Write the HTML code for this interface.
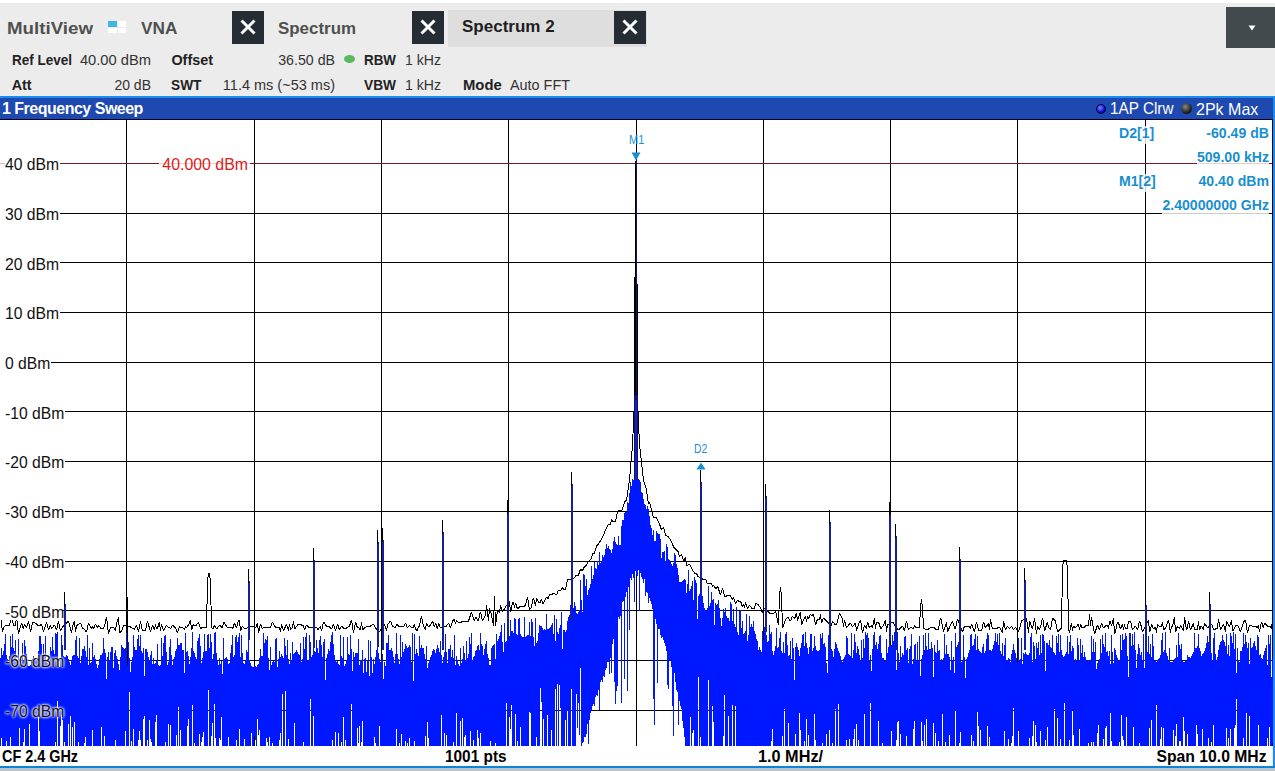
<!DOCTYPE html>
<html><head><meta charset="utf-8">
<style>
*{margin:0;padding:0;box-sizing:border-box}
html,body{width:1275px;height:771px;overflow:hidden;background:#ececec;font-family:"Liberation Sans", sans-serif}
.abs{position:absolute}
.t{position:absolute;white-space:pre}
.xb{position:absolute;top:11px;width:32px;height:33px;background:#252c33}
.xb svg{display:block}
.hl{position:absolute;left:0;width:1272px;height:1px;background:#000}
.vl{position:absolute;top:120px;width:1px;height:626px;background:#000}
</style></head><body>
<div class="abs" style="left:0;top:0;width:1275px;height:3px;background:#fff"></div>
<div class="abs" style="left:448px;top:10px;width:199px;height:37px;background:#dedede"></div>
<div class="xb" style="left:232px"><svg width="32" height="33" viewBox="0 0 32 33"><path d="M9.5 9.5L22.5 22.5M22.5 9.5L9.5 22.5" stroke="#fff" stroke-width="3" stroke-linecap="butt"/></svg></div><div class="xb" style="left:412px"><svg width="32" height="33" viewBox="0 0 32 33"><path d="M9.5 9.5L22.5 22.5M22.5 9.5L9.5 22.5" stroke="#fff" stroke-width="3" stroke-linecap="butt"/></svg></div><div class="xb" style="left:614px"><svg width="32" height="33" viewBox="0 0 32 33"><path d="M9.5 9.5L22.5 22.5M22.5 9.5L9.5 22.5" stroke="#fff" stroke-width="3" stroke-linecap="butt"/></svg></div>
<div class="abs" style="left:1226px;top:7px;width:49px;height:41px;background:#434a4e"></div>
<svg class="abs" style="left:1248px;top:25px" width="8" height="6"><path d="M0.5 0.5H7.5L4 5.5Z" fill="#fff"/></svg>
<!-- multiview icon -->
<div class="abs" style="left:108px;top:21px;width:9px;height:6px;background:#3fb6e8"></div>
<div class="abs" style="left:118px;top:21px;width:8px;height:6px;background:#fff"></div>
<div class="abs" style="left:108px;top:28px;width:9px;height:5px;background:#fff"></div>
<div class="abs" style="left:118px;top:28px;width:8px;height:5px;background:#fff"></div>
<div class="t" style="left:6.5px;top:19.83px;font-size:16.5px;line-height:16.5px;font-weight:700;color:#505050;transform:scaleX(1.134);transform-origin:0 0;">MultiView</div>
<div class="t" style="left:140.5px;top:19.83px;font-size:16.5px;line-height:16.5px;font-weight:700;color:#505050;transform:scaleX(1.043);transform-origin:0 0;">VNA</div>
<div class="t" style="left:278px;top:19.83px;font-size:16.5px;line-height:16.5px;font-weight:700;color:#505050;transform:scaleX(1.025);transform-origin:0 0;">Spectrum</div>
<div class="t" style="left:462px;top:18.41px;font-size:17px;line-height:17px;font-weight:700;color:#1e1e1e;">Spectrum 2</div>
<div class="t" style="left:11.7px;top:52.61px;font-size:14.4px;line-height:14.4px;font-weight:700;color:#222;transform:scaleX(0.9375);transform-origin:0 0;">Ref Level</div>
<div class="t" style="right:1124px;top:52.56px;font-size:14.7px;line-height:14.7px;font-weight:400;color:#333;">40.00 dBm</div>
<div class="t" style="left:171.4px;top:52.61px;font-size:14.4px;line-height:14.4px;font-weight:700;color:#222;">Offset</div>
<div class="t" style="right:940px;top:52.98px;font-size:14.2px;line-height:14.2px;font-weight:400;color:#333;">36.50 dB</div>
<div class="abs" style="left:344px;top:55px;width:11px;height:8px;border-radius:50%;background:#5cb85c"></div>
<div class="t" style="left:363.5px;top:52.61px;font-size:14.4px;line-height:14.4px;font-weight:700;color:#222;transform:scaleX(0.93);transform-origin:0 0;">RBW</div>
<div class="t" style="left:405px;top:53.06px;font-size:14.1px;line-height:14.1px;font-weight:400;color:#333;">1 kHz</div>
<div class="t" style="left:11.7px;top:77.71px;font-size:14.4px;line-height:14.4px;font-weight:700;color:#222;">Att</div>
<div class="t" style="right:1124px;top:78.15px;font-size:14px;line-height:14px;font-weight:400;color:#333;">20 dB</div>
<div class="t" style="left:171.4px;top:77.71px;font-size:14.4px;line-height:14.4px;font-weight:700;color:#222;transform:scaleX(0.953);transform-origin:0 0;">SWT</div>
<div class="t" style="right:940px;top:77.73px;font-size:14.5px;line-height:14.5px;font-weight:400;color:#333;">11.4 ms (~53 ms)</div>
<div class="t" style="left:363.5px;top:77.71px;font-size:14.4px;line-height:14.4px;font-weight:700;color:#222;transform:scaleX(0.952);transform-origin:0 0;">VBW</div>
<div class="t" style="left:405px;top:78.06px;font-size:14.1px;line-height:14.1px;font-weight:400;color:#333;">1 kHz</div>
<div class="t" style="left:462.8px;top:77.71px;font-size:14.4px;line-height:14.4px;font-weight:700;color:#222;transform:scaleX(1.03);transform-origin:0 0;">Mode</div>
<div class="t" style="left:510px;top:77.81px;font-size:14.4px;line-height:14.4px;font-weight:400;color:#333;">Auto FFT</div>
<!-- frame -->
<div class="abs" style="left:0;top:96px;width:1275px;height:2px;background:#1a8cf0"></div>
<div class="abs" style="left:1273px;top:96px;width:2px;height:672px;background:#1a8cf0"></div>
<div class="abs" style="left:0;top:766px;width:1275px;height:2px;background:#0c84d8"></div>
<div class="abs" style="left:0;top:768px;width:1275px;height:3px;background:#b9c4cd"></div>
<div class="abs" style="left:0;top:98px;width:1273px;height:21px;background:#1e49b0"></div>
<div class="abs" style="left:0;top:119px;width:1273px;height:1px;background:#00001a"></div>
<div class="abs" style="left:1272px;top:119px;width:1px;height:627px;background:#00001a"></div>
<div class="abs" style="left:0;top:120px;width:1272px;height:646px;background:#fff"></div>
<div class="t" style="left:2px;top:101.46px;font-size:16px;line-height:16px;font-weight:700;color:#fff;letter-spacing:-0.5px;">1 Frequency Sweep</div>
<div class="abs" style="left:1096px;top:104px;width:10px;height:10px;border-radius:50%;background:radial-gradient(circle at 40% 35%,#8080ff,#1010d0 60%,#000060);border:1px solid #000040"></div>
<div class="t" style="left:1110px;top:101.46px;font-size:16px;line-height:16px;font-weight:400;color:#fff;transform:scaleX(0.956);transform-origin:0 0;">1AP Clrw</div>
<div class="abs" style="left:1181px;top:103px;width:11px;height:11px;border-radius:50%;background:radial-gradient(circle at 40% 35%,#888,#222 60%,#000);"></div>
<div class="t" style="left:1195.6px;top:101.29px;font-size:16.2px;line-height:16.2px;font-weight:400;color:#fff;transform:scaleX(0.99);transform-origin:0 0;">2Pk Max</div>
<div class="hl" style="top:213px"></div>
<div class="hl" style="top:262px"></div>
<div class="hl" style="top:312px"></div>
<div class="hl" style="top:362px"></div>
<div class="hl" style="top:411px"></div>
<div class="hl" style="top:461px"></div>
<div class="hl" style="top:511px"></div>
<div class="hl" style="top:561px"></div>
<div class="hl" style="top:610px"></div>
<div class="hl" style="top:660px"></div>
<div class="hl" style="top:710px"></div>
<div class="vl" style="left:126px"></div>
<div class="vl" style="left:254px"></div>
<div class="vl" style="left:381px"></div>
<div class="vl" style="left:508px"></div>
<div class="vl" style="left:636px"></div>
<div class="vl" style="left:763px"></div>
<div class="vl" style="left:890px"></div>
<div class="vl" style="left:1017px"></div>
<div class="vl" style="left:1145px"></div>
<div class="abs" style="left:0;top:163px;width:1272px;height:1px;background:#6b1f1f"></div>
<svg width="1273" height="626" viewBox="0 120 1273 626" style="position:absolute;left:0;top:120px" shape-rendering="crispEdges">
<path d="M0.5 658V746M1.5 648V738M2.5 655V746M3.5 651V746M4.5 644V746M5.5 634V746M6.5 655V741M7.5 659V746M8.5 662V746M9.5 656V746M10.5 636V737M11.5 647V746M12.5 634V746M13.5 648V746M14.5 651V746M15.5 640V746M16.5 659V746M17.5 662V746M18.5 639V746M19.5 664V728M20.5 664V746M21.5 666V746M22.5 643V746M23.5 661V742M24.5 640V729M25.5 646V746M26.5 654V746M27.5 662V746M28.5 666V746M29.5 666V724M30.5 665V746M31.5 661V746M32.5 659V746M33.5 656V746M34.5 658V746M35.5 658V746M36.5 660V746M37.5 658V746M38.5 651V713M39.5 636V731M40.5 636V746M41.5 644V746M42.5 657V746M43.5 644V746M44.5 654V746M45.5 636V746M46.5 662V746M47.5 663V746M48.5 664V746M49.5 663V746M50.5 647V746M51.5 651V746M52.5 637V746M53.5 650V746M54.5 654V746M55.5 633V742M56.5 634V746M57.5 632V701M58.5 660V746M59.5 667V746M60.5 658V726M61.5 635V715M62.5 645V720M63.5 656V746M64.5 657V742M65.5 657V746M66.5 655V746M67.5 656V746M68.5 659V724M69.5 662V746M70.5 665V716M71.5 660V746M72.5 656V727M73.5 655V746M74.5 655V722M75.5 640V746M76.5 636V746M77.5 656V746M78.5 658V742M79.5 638V746M80.5 663V746M81.5 656V746M82.5 649V746M83.5 649V746M84.5 646V743M85.5 651V737M86.5 657V746M87.5 635V746M88.5 665V746M89.5 648V746M90.5 663V746M91.5 662V746M92.5 643V730M93.5 657V746M94.5 655V746M95.5 659V746M96.5 664V746M97.5 668V746M98.5 665V746M99.5 659V746M100.5 655V746M101.5 655V727M102.5 653V746M103.5 638V746M104.5 649V736M105.5 653V746M106.5 679V746M107.5 657V746M108.5 652V746M109.5 660V746M110.5 652V746M111.5 647V746M112.5 647V746M113.5 668V746M114.5 653V746M115.5 650V740M116.5 656V746M117.5 659V746M118.5 664V746M119.5 670V746M120.5 657V746M121.5 645V746M122.5 647V746M123.5 648V746M124.5 649V746M125.5 648V731M126.5 633V746M127.5 647V746M128.5 642V746M129.5 658V692M130.5 672V746M131.5 662V741M132.5 657V746M133.5 635V729M134.5 647V746M135.5 650V746M136.5 650V746M137.5 639V746M138.5 635V740M139.5 646V731M140.5 635V740M141.5 651V746M142.5 653V746M143.5 648V719M144.5 676V716M145.5 649V746M146.5 649V746M147.5 652V740M148.5 657V746M149.5 661V720M150.5 655V739M151.5 651V742M152.5 664V746M153.5 658V746M154.5 664V746M155.5 663V722M156.5 661V715M157.5 644V746M158.5 665V746M159.5 666V746M160.5 665V746M161.5 638V746M162.5 656V746M163.5 643V746M164.5 636V746M165.5 635V742M166.5 652V746M167.5 665V746M168.5 662V724M169.5 647V746M170.5 639V725M171.5 655V746M172.5 665V746M173.5 659V746M174.5 657V746M175.5 651V746M176.5 649V735M177.5 638V746M178.5 645V707M179.5 645V746M180.5 643V730M181.5 643V746M182.5 650V746M183.5 650V746M184.5 673V746M185.5 633V746M186.5 652V746M187.5 651V726M188.5 656V719M189.5 664V746M190.5 657V746M191.5 648V746M192.5 632V705M193.5 651V746M194.5 653V743M195.5 657V746M196.5 659V746M197.5 641V746M198.5 638V746M199.5 634V734M200.5 646V746M201.5 663V742M202.5 658V737M203.5 652V732M204.5 634V746M205.5 651V746M206.5 651V746M207.5 635V746M208.5 634V690M209.5 648V746M210.5 634V746M211.5 642V736M212.5 659V723M213.5 654V746M214.5 633V704M215.5 632V738M216.5 653V746M217.5 661V746M218.5 665V746M219.5 658V738M220.5 664V740M221.5 661V717M222.5 674V746M223.5 638V746M224.5 659V746M225.5 658V746M226.5 657V746M227.5 659V746M228.5 664V737M229.5 663V746M230.5 653V746M231.5 645V746M232.5 635V746M233.5 657V746M234.5 655V746M235.5 637V746M236.5 635V740M237.5 642V746M238.5 637V746M239.5 633V729M240.5 657V746M241.5 635V746M242.5 653V746M243.5 663V746M244.5 664V739M245.5 661V746M246.5 650V746M247.5 652V746M248.5 633V746M249.5 660V746M250.5 663V746M251.5 666V733M252.5 667V746M253.5 667V746M254.5 666V736M255.5 666V740M256.5 667V746M257.5 665V719M258.5 664V735M259.5 658V730M260.5 649V746M261.5 656V746M262.5 656V746M263.5 633V746M264.5 643V746M265.5 639V746M266.5 640V738M267.5 636V742M268.5 658V746M269.5 670V737M270.5 647V746M271.5 665V746M272.5 662V743M273.5 661V746M274.5 662V746M275.5 639V746M276.5 638V746M277.5 667V746M278.5 659V746M279.5 651V740M280.5 657V733M281.5 654V746M282.5 656V694M283.5 658V746M284.5 638V746M285.5 646V691M286.5 655V746M287.5 640V746M288.5 659V739M289.5 664V746M290.5 653V746M291.5 660V746M292.5 642V746M293.5 654V746M294.5 653V723M295.5 652V746M296.5 650V746M297.5 652V746M298.5 654V746M299.5 655V746M300.5 643V746M301.5 662V746M302.5 659V746M303.5 637V742M304.5 649V746M305.5 637V746M306.5 633V746M307.5 661V746M308.5 660V746M309.5 635V746M310.5 642V699M311.5 657V746M312.5 655V746M313.5 641V716M314.5 651V746M315.5 652V746M316.5 640V746M317.5 648V746M318.5 653V746M319.5 640V746M320.5 636V746M321.5 645V746M322.5 657V746M323.5 642V746M324.5 639V746M325.5 680V746M326.5 658V746M327.5 654V746M328.5 649V746M329.5 651V746M330.5 642V746M331.5 635V746M332.5 632V740M333.5 644V746M334.5 655V746M335.5 660V732M336.5 662V746M337.5 661V746M338.5 664V733M339.5 665V746M340.5 635V746M341.5 656V742M342.5 658V746M343.5 637V717M344.5 666V746M345.5 664V740M346.5 660V746M347.5 637V746M348.5 654V746M349.5 655V746M350.5 635V746M351.5 649V704M352.5 671V746M353.5 652V746M354.5 657V746M355.5 653V746M356.5 653V746M357.5 653V728M358.5 639V743M359.5 665V726M360.5 660V746M361.5 660V742M362.5 650V721M363.5 673V746M364.5 659V746M365.5 658V746M366.5 672V746M367.5 660V746M368.5 640V746M369.5 676V746M370.5 641V746M371.5 657V746M372.5 673V746M373.5 659V746M374.5 664V737M375.5 657V743M376.5 650V746M377.5 640V746M378.5 653V746M379.5 659V726M380.5 662V746M381.5 660V746M382.5 654V746M383.5 679V746M384.5 662V746M385.5 666V746M386.5 643V746M387.5 643V746M388.5 635V746M389.5 650V746M390.5 650V746M391.5 648V746M392.5 651V746M393.5 657V746M394.5 663V746M395.5 654V746M396.5 633V729M397.5 654V746M398.5 659V746M399.5 664V743M400.5 635V746M401.5 657V734M402.5 642V746M403.5 652V746M404.5 649V746M405.5 644V741M406.5 646V746M407.5 648V743M408.5 647V746M409.5 645V738M410.5 647V746M411.5 662V746M412.5 633V746M413.5 681V746M414.5 634V741M415.5 654V746M416.5 649V746M417.5 653V746M418.5 656V746M419.5 636V746M420.5 648V746M421.5 645V746M422.5 648V746M423.5 648V746M424.5 654V746M425.5 659V736M426.5 646V746M427.5 668V722M428.5 663V738M429.5 660V746M430.5 657V746M431.5 655V746M432.5 651V746M433.5 649V746M434.5 650V746M435.5 653V746M436.5 649V746M437.5 645V746M438.5 648V746M439.5 652V746M440.5 641V746M441.5 655V715M442.5 663V746M443.5 657V746M444.5 652V733M445.5 634V746M446.5 652V735M447.5 663V746M448.5 649V746M449.5 649V746M450.5 645V746M451.5 657V746M452.5 650V746M453.5 658V742M454.5 635V746M455.5 665V746M456.5 656V713M457.5 660V746M458.5 664V746M459.5 666V746M460.5 648V721M461.5 663V746M462.5 659V718M463.5 646V746M464.5 653V737M465.5 661V735M466.5 641V746M467.5 658V746M468.5 654V746M469.5 637V746M470.5 644V731M471.5 633V746M472.5 660V746M473.5 657V740M474.5 656V746M475.5 651V746M476.5 650V746M477.5 646V730M478.5 645V738M479.5 650V746M480.5 633V733M481.5 644V746M482.5 646V746M483.5 655V746M484.5 649V746M485.5 644V746M486.5 641V746M487.5 654V746M488.5 658V746M489.5 665V746M490.5 665V741M491.5 648V746M492.5 646V746M493.5 645V746M494.5 644V746M495.5 659V743M496.5 634V746M497.5 641V746M498.5 639V746M499.5 636V746M500.5 632V746M501.5 625V746M502.5 642V746M503.5 652V746M504.5 623V746M505.5 642V746M506.5 641V703M507.5 631V746M508.5 639V746M509.5 636V717M510.5 620V729M511.5 631V705M512.5 631V746M513.5 633V746M514.5 618V746M515.5 619V714M516.5 634V746M517.5 635V741M518.5 619V746M519.5 618V746M520.5 634V727M521.5 636V746M522.5 637V746M523.5 637V746M524.5 617V746M525.5 637V746M526.5 636V746M527.5 635V746M528.5 635V746M529.5 622V712M530.5 636V713M531.5 619V746M532.5 622V746M533.5 637V746M534.5 646V746M535.5 618V746M536.5 643V737M537.5 641V746M538.5 633V746M539.5 625V746M540.5 626V688M541.5 626V702M542.5 628V746M543.5 630V719M544.5 629V746M545.5 630V746M546.5 614V746M547.5 629V715M548.5 629V746M549.5 628V746M550.5 627V746M551.5 625V730M552.5 623V746M553.5 634V746M554.5 615V746M555.5 641V689M556.5 619V746M557.5 632V684M558.5 634V746M559.5 628V685M560.5 625V708M561.5 612V746M562.5 649V746M563.5 630V746M564.5 630V746M565.5 632V720M566.5 630V746M567.5 621V711M568.5 617V746M569.5 615V746M570.5 605V746M571.5 615V689M572.5 611V746M573.5 608V746M574.5 602V746M575.5 606V746M576.5 613V694M577.5 614V728M578.5 612V703M579.5 610V735M580.5 580V668M581.5 600V746M582.5 612V743M583.5 574V742M584.5 575V737M585.5 586V737M586.5 579V734M587.5 595V724M588.5 590V744M589.5 588V720M590.5 584V713M591.5 566V711M592.5 579V706M593.5 575V704M594.5 562V706M595.5 568V697M596.5 569V695M597.5 561V696M598.5 565V690M599.5 552V710M600.5 563V682M601.5 561V680M602.5 555V682M603.5 557V676M604.5 555V677M605.5 549V670M606.5 544V668M607.5 548V662M608.5 546V662M609.5 549V674M610.5 550V658M611.5 553V673M612.5 549V644M613.5 541V639M614.5 537V682M615.5 542V704M616.5 544V691M617.5 545V686M618.5 536V617M619.5 545V619M620.5 545V616M621.5 526V703M622.5 520V602M623.5 520V601M624.5 513V679M625.5 512V597M626.5 512V592M627.5 502V691M628.5 503V587M629.5 493V630M630.5 482V578M631.5 486V580M632.5 479V574M633.5 480V578M634.5 479V602M635.5 478V571M636.5 478V575M637.5 478V576M638.5 479V570M639.5 480V611M640.5 482V573M641.5 492V577M642.5 493V579M643.5 499V583M644.5 504V579M645.5 505V596M646.5 509V592M647.5 506V593M648.5 509V603M649.5 516V598M650.5 525V601M651.5 528V604M652.5 535V609M653.5 530V699M654.5 541V725M655.5 541V619M656.5 531V624M657.5 533V683M658.5 534V629M659.5 534V629M660.5 539V635M661.5 558V638M662.5 552V637M663.5 552V640M664.5 551V643M665.5 561V646M666.5 544V651M667.5 547V685M668.5 559V689M669.5 560V660M670.5 562V660M671.5 564V667M672.5 566V706M673.5 563V736M674.5 553V673M675.5 555V682M676.5 564V690M677.5 568V692M678.5 575V725M679.5 582V701M680.5 582V706M681.5 582V709M682.5 581V721M683.5 580V728M684.5 579V737M685.5 580V746M686.5 593V746M687.5 584V746M688.5 570V746M689.5 591V746M690.5 589V717M691.5 586V746M692.5 581V733M693.5 600V730M694.5 577V746M695.5 580V746M696.5 583V746M697.5 619V746M698.5 596V677M699.5 594V746M700.5 585V737M701.5 589V746M702.5 596V746M703.5 603V746M704.5 608V746M705.5 610V746M706.5 611V746M707.5 608V746M708.5 586V680M709.5 606V746M710.5 603V746M711.5 592V746M712.5 600V706M713.5 599V722M714.5 625V746M715.5 603V746M716.5 605V746M717.5 604V746M718.5 600V746M719.5 608V746M720.5 618V746M721.5 626V746M722.5 618V746M723.5 609V736M724.5 612V695M725.5 608V746M726.5 616V746M727.5 618V746M728.5 618V716M729.5 621V746M730.5 602V746M731.5 604V746M732.5 621V705M733.5 609V746M734.5 624V746M735.5 627V706M736.5 607V746M737.5 632V746M738.5 635V746M739.5 611V746M740.5 610V746M741.5 628V746M742.5 621V746M743.5 634V746M744.5 633V746M745.5 631V746M746.5 614V746M747.5 641V746M748.5 635V746M749.5 616V746M750.5 627V746M751.5 624V746M752.5 627V746M753.5 621V746M754.5 631V746M755.5 634V746M756.5 639V746M757.5 641V746M758.5 650V746M759.5 647V746M760.5 650V746M761.5 652V746M762.5 631V746M763.5 640V746M764.5 627V746M765.5 625V746M766.5 635V746M767.5 642V746M768.5 641V746M769.5 625V746M770.5 634V746M771.5 632V741M772.5 651V729M773.5 655V746M774.5 651V746M775.5 646V746M776.5 628V746M777.5 648V746M778.5 647V746M779.5 638V746M780.5 632V746M781.5 651V746M782.5 653V736M783.5 642V746M784.5 653V709M785.5 634V746M786.5 632V746M787.5 645V746M788.5 656V723M789.5 655V746M790.5 641V746M791.5 659V746M792.5 638V746M793.5 648V746M794.5 680V746M795.5 647V734M796.5 643V746M797.5 647V746M798.5 650V746M799.5 656V713M800.5 648V730M801.5 643V746M802.5 635V746M803.5 634V746M804.5 646V741M805.5 632V746M806.5 643V719M807.5 648V746M808.5 654V735M809.5 647V746M810.5 634V746M811.5 634V746M812.5 651V746M813.5 648V746M814.5 636V714M815.5 646V740M816.5 650V746M817.5 651V746M818.5 651V746M819.5 650V746M820.5 634V746M821.5 638V746M822.5 633V743M823.5 644V746M824.5 643V746M825.5 647V746M826.5 663V734M827.5 673V746M828.5 635V746M829.5 649V730M830.5 644V746M831.5 649V746M832.5 651V743M833.5 657V746M834.5 649V746M835.5 642V709M836.5 644V746M837.5 648V746M838.5 651V704M839.5 653V746M840.5 656V746M841.5 660V746M842.5 662V746M843.5 659V746M844.5 657V746M845.5 655V746M846.5 636V740M847.5 638V746M848.5 654V746M849.5 655V739M850.5 656V746M851.5 633V746M852.5 658V746M853.5 650V739M854.5 634V729M855.5 642V746M856.5 653V724M857.5 646V746M858.5 649V740M859.5 655V746M860.5 661V746M861.5 640V746M862.5 658V746M863.5 639V746M864.5 648V714M865.5 632V746M866.5 635V746M867.5 633V746M868.5 638V746M869.5 661V746M870.5 655V703M871.5 671V746M872.5 649V746M873.5 635V746M874.5 632V746M875.5 645V746M876.5 642V746M877.5 649V746M878.5 644V721M879.5 636V746M880.5 635V746M881.5 653V746M882.5 658V743M883.5 658V746M884.5 661V746M885.5 660V746M886.5 639V746M887.5 653V746M888.5 647V746M889.5 633V746M890.5 646V746M891.5 645V731M892.5 635V746M893.5 641V746M894.5 632V746M895.5 644V746M896.5 670V740M897.5 632V722M898.5 653V721M899.5 662V746M900.5 646V734M901.5 657V746M902.5 653V746M903.5 655V746M904.5 637V746M905.5 636V746M906.5 650V736M907.5 648V746M908.5 663V746M909.5 649V746M910.5 646V746M911.5 634V746M912.5 664V746M913.5 659V729M914.5 645V721M915.5 644V746M916.5 661V746M917.5 642V746M918.5 661V746M919.5 636V746M920.5 676V746M921.5 659V722M922.5 655V741M923.5 635V746M924.5 650V725M925.5 633V746M926.5 646V719M927.5 650V746M928.5 633V746M929.5 649V746M930.5 649V746M931.5 642V746M932.5 648V746M933.5 677V723M934.5 645V746M935.5 652V733M936.5 653V746M937.5 640V746M938.5 651V741M939.5 650V746M940.5 660V746M941.5 659V746M942.5 661V714M943.5 658V746M944.5 634V746M945.5 654V742M946.5 645V746M947.5 654V746M948.5 654V746M949.5 657V735M950.5 670V746M951.5 641V746M952.5 660V746M953.5 657V746M954.5 673V746M955.5 633V711M956.5 647V746M957.5 645V746M958.5 642V746M959.5 650V743M960.5 636V732M961.5 662V746M962.5 661V746M963.5 635V746M964.5 657V746M965.5 678V746M966.5 659V746M967.5 657V746M968.5 653V746M969.5 650V746M970.5 635V746M971.5 634V735M972.5 646V746M973.5 645V741M974.5 639V746M975.5 634V746M976.5 650V746M977.5 636V712M978.5 649V726M979.5 651V746M980.5 652V730M981.5 653V746M982.5 647V746M983.5 644V746M984.5 653V746M985.5 651V746M986.5 639V746M987.5 633V726M988.5 635V746M989.5 650V737M990.5 650V746M991.5 651V746M992.5 649V746M993.5 645V746M994.5 641V746M995.5 633V746M996.5 642V746M997.5 634V746M998.5 645V746M999.5 633V746M1000.5 651V746M1001.5 654V746M1002.5 643V746M1003.5 656V746M1004.5 645V731M1005.5 638V746M1006.5 660V746M1007.5 660V746M1008.5 658V739M1009.5 659V746M1010.5 662V746M1011.5 654V743M1012.5 650V736M1013.5 644V708M1014.5 650V746M1015.5 653V746M1016.5 658V746M1017.5 662V746M1018.5 638V731M1019.5 661V746M1020.5 659V746M1021.5 638V746M1022.5 664V746M1023.5 653V746M1024.5 654V746M1025.5 652V746M1026.5 654V746M1027.5 655V746M1028.5 655V746M1029.5 653V738M1030.5 637V746M1031.5 633V746M1032.5 662V736M1033.5 642V721M1034.5 646V746M1035.5 659V725M1036.5 643V742M1037.5 648V746M1038.5 642V746M1039.5 655V746M1040.5 635V731M1041.5 653V746M1042.5 634V746M1043.5 635V746M1044.5 641V746M1045.5 671V740M1046.5 643V746M1047.5 643V727M1048.5 645V746M1049.5 640V746M1050.5 647V746M1051.5 648V746M1052.5 635V746M1053.5 652V746M1054.5 653V709M1055.5 655V746M1056.5 636V746M1057.5 643V718M1058.5 634V746M1059.5 652V746M1060.5 635V739M1061.5 650V746M1062.5 655V746M1063.5 657V746M1064.5 656V703M1065.5 654V746M1066.5 652V746M1067.5 636V746M1068.5 654V746M1069.5 642V740M1070.5 635V746M1071.5 651V746M1072.5 646V710M1073.5 648V735M1074.5 661V746M1075.5 659V746M1076.5 660V746M1077.5 638V746M1078.5 645V746M1079.5 661V729M1080.5 639V746M1081.5 653V746M1082.5 645V746M1083.5 657V746M1084.5 652V746M1085.5 657V746M1086.5 660V746M1087.5 661V746M1088.5 660V743M1089.5 660V746M1090.5 661V746M1091.5 636V742M1092.5 652V746M1093.5 639V742M1094.5 652V746M1095.5 642V746M1096.5 669V746M1097.5 663V733M1098.5 661V725M1099.5 659V746M1100.5 639V746M1101.5 653V746M1102.5 635V746M1103.5 644V739M1104.5 647V746M1105.5 633V728M1106.5 652V726M1107.5 651V746M1108.5 656V746M1109.5 651V746M1110.5 664V713M1111.5 635V741M1112.5 652V746M1113.5 663V746M1114.5 648V746M1115.5 650V746M1116.5 655V746M1117.5 658V746M1118.5 660V746M1119.5 661V742M1120.5 635V746M1121.5 650V715M1122.5 634V736M1123.5 640V740M1124.5 639V746M1125.5 633V746M1126.5 636V717M1127.5 656V746M1128.5 677V746M1129.5 633V746M1130.5 633V746M1131.5 646V746M1132.5 634V746M1133.5 645V727M1134.5 632V746M1135.5 650V746M1136.5 668V746M1137.5 654V746M1138.5 644V746M1139.5 648V743M1140.5 655V746M1141.5 652V746M1142.5 661V746M1143.5 634V746M1144.5 668V746M1145.5 649V746M1146.5 649V746M1147.5 652V746M1148.5 636V746M1149.5 654V728M1150.5 644V746M1151.5 657V720M1152.5 634V746M1153.5 646V746M1154.5 661V746M1155.5 660V746M1156.5 662V705M1157.5 660V746M1158.5 659V746M1159.5 658V746M1160.5 655V739M1161.5 640V727M1162.5 633V746M1163.5 652V728M1164.5 650V746M1165.5 632V746M1166.5 653V746M1167.5 656V746M1168.5 661V746M1169.5 648V746M1170.5 662V746M1171.5 662V746M1172.5 662V746M1173.5 661V730M1174.5 659V746M1175.5 658V736M1176.5 645V724M1177.5 657V746M1178.5 633V746M1179.5 645V741M1180.5 649V741M1181.5 644V746M1182.5 661V746M1183.5 662V717M1184.5 662V731M1185.5 661V746M1186.5 661V746M1187.5 655V734M1188.5 657V746M1189.5 657V746M1190.5 658V746M1191.5 656V746M1192.5 654V746M1193.5 652V746M1194.5 633V746M1195.5 648V746M1196.5 648V725M1197.5 646V734M1198.5 634V746M1199.5 648V746M1200.5 651V746M1201.5 656V746M1202.5 654V729M1203.5 653V746M1204.5 651V746M1205.5 648V746M1206.5 643V746M1207.5 636V746M1208.5 642V738M1209.5 641V746M1210.5 646V746M1211.5 653V742M1212.5 660V746M1213.5 638V725M1214.5 633V746M1215.5 654V746M1216.5 660V746M1217.5 657V746M1218.5 650V746M1219.5 645V746M1220.5 642V746M1221.5 641V746M1222.5 635V746M1223.5 640V746M1224.5 642V746M1225.5 646V746M1226.5 634V728M1227.5 654V746M1228.5 645V738M1229.5 656V746M1230.5 633V729M1231.5 636V746M1232.5 643V746M1233.5 632V746M1234.5 649V728M1235.5 634V725M1236.5 673V699M1237.5 648V746M1238.5 660V746M1239.5 662V746M1240.5 651V746M1241.5 651V746M1242.5 647V746M1243.5 633V738M1244.5 644V746M1245.5 635V746M1246.5 642V713M1247.5 648V746M1248.5 643V746M1249.5 664V716M1250.5 638V746M1251.5 648V746M1252.5 647V746M1253.5 643V746M1254.5 641V746M1255.5 646V746M1256.5 650V746M1257.5 635V746M1258.5 637V725M1259.5 655V746M1260.5 654V746M1261.5 658V746M1262.5 659V746M1263.5 655V746M1264.5 651V746M1265.5 648V746M1266.5 645V746M1267.5 665V738M1268.5 635V746M1269.5 644V727M1270.5 635V746M1271.5 677V746M1272.5 659V743" stroke="#0018ff" stroke-width="1" fill="none"/>
<polyline points="0.5,616 2.5,632 3.5,628 5.5,625 7.5,625 9.5,625 11.5,617 13.5,625 15.5,626 16.5,616 18.5,634 21.5,623 23.5,629 24.5,624 26.5,628 28.5,621 30.5,632 32.5,623 33.5,622 36.5,624 38.5,626 40.5,625 41.5,624 43.5,632 46.5,622 48.5,630 50.5,625 51.5,629 54.5,625 56.5,630 58.5,621 60.5,631 62.5,627 66.5,623 68.5,621 71.5,633 72.5,627 73.5,623 74.5,621 75.5,632 76.5,626 77.5,625 80.5,623 82.5,628 83.5,628 85.5,631 86.5,632 88.5,623 91.5,629 92.5,626 93.5,629 95.5,624 97.5,628 98.5,625 100.5,628 103.5,628 104.5,626 106.5,617 108.5,634 110.5,627 113.5,627 115.5,631 116.5,624 118.5,617 119.5,633 121.5,631 123.5,626 125.5,625 130.5,627 133.5,629 134.5,629 136.5,625 138.5,632 140.5,621 142.5,631 145.5,630 147.5,621 150.5,632 152.5,625 154.5,630 155.5,624 156.5,629 157.5,628 159.5,622 160.5,631 161.5,624 163.5,631 166.5,625 168.5,628 169.5,627 170.5,629 172.5,625 174.5,627 175.5,628 177.5,633 179.5,626 180.5,628 182.5,627 184.5,630 185.5,626 186.5,628 189.5,623 190.5,620 191.5,630 193.5,624 194.5,626 196.5,625 198.5,622 200.5,629 202.5,627 206.5,628 207.5,581 208.5,574 208.5,573 209.5,574 210.5,581 211.5,628 213.5,628 214.5,625 216.5,629 217.5,628 219.5,625 220.5,626 222.5,628 223.5,622 226.5,626 227.5,628 229.5,627 231.5,627 232.5,629 234.5,623 236.5,628 238.5,620 239.5,621 240.5,631 242.5,626 244.5,629 252.5,626 255.5,628 257.5,623 258.5,633 260.5,624 262.5,629 263.5,627 265.5,627 267.5,627 268.5,627 270.5,627 272.5,622 274.5,626 276.5,628 279.5,627 280.5,632 281.5,624 283.5,631 286.5,624 288.5,631 289.5,624 290.5,630 292.5,627 293.5,621 294.5,628 295.5,628 298.5,624 301.5,625 303.5,626 304.5,630 306.5,625 309.5,628 316.5,627 317.5,629 318.5,629 320.5,626 321.5,631 323.5,622 326.5,626 329.5,627 331.5,629 333.5,624 335.5,631 337.5,624 339.5,630 341.5,626 344.5,629 346.5,628 349.5,626 351.5,620 353.5,633 355.5,622 357.5,628 358.5,627 359.5,629 360.5,630 361.5,622 362.5,630 364.5,628 367.5,626 369.5,627 370.5,626 373.5,624 375.5,628 379.5,632 384.5,624 386.5,631 387.5,625 390.5,621 392.5,626 395.5,628 396.5,624 398.5,626 400.5,626 401.5,626 403.5,627 405.5,623 407.5,628 409.5,625 411.5,628 413.5,627 414.5,624 415.5,629 417.5,631 418.5,626 419.5,626 421.5,616 423.5,626 425.5,630 426.5,623 428.5,627 430.5,625 432.5,621 434.5,627 435.5,623 437.5,629 438.5,623 440.5,628 446.5,626 448.5,623 450.5,628 452.5,621 454.5,619 455.5,624 456.5,620 458.5,623 461.5,622 464.5,621 466.5,621 468.5,621 471.5,612 472.5,616 474.5,621 475.5,617 478.5,621 479.5,615 480.5,612 482.5,621 485.5,615 486.5,605 488.5,621 489.5,608 491.5,615 493.5,626 494.5,596 495.5,626 497.5,610 499.5,613 500.5,605 502.5,612 505.5,607 509.5,601 510.5,612 512.5,603 513.5,602 514.5,608 515.5,603 517.5,609 520.5,606 523.5,607 525.5,605 527.5,597 529.5,610 531.5,607 532.5,601 533.5,598 535.5,606 536.5,598 538.5,602 540.5,602 541.5,599 542.5,603 543.5,603 546.5,597 548.5,599 549.5,594 551.5,595 553.5,593 556.5,595 558.5,590 560.5,591 562.5,587 563.5,590 565.5,589 567.5,580 573.5,579 576.5,575 577.5,575 578.5,575 580.5,569 582.5,571 583.5,568 586.5,565 588.5,561 589.5,561 591.5,558 592.5,554 594.5,553 596.5,546 598.5,544 601.5,539 603.5,535 605.5,530 608.5,524 610.5,525 611.5,519 612.5,521 614.5,521 615.5,521 617.5,512 619.5,510 621.5,511 623.5,506 624.5,502 626.5,500 629.5,480 632.5,445 634.5,400 635.5,161 636.5,161 637.5,400 639.5,445 643.5,480 646.5,490 647.5,498 648.5,504 649.5,502 651.5,510 653.5,518 654.5,517 656.5,518 659.5,524 661.5,530 663.5,527 665.5,535 668.5,537 670.5,540 672.5,544 673.5,547 675.5,549 678.5,552 679.5,557 681.5,554 683.5,561 684.5,560 685.5,557 686.5,566 689.5,564 692.5,570 694.5,573 696.5,573 697.5,576 702.5,579 704.5,580 705.5,579 707.5,584 709.5,583 711.5,583 712.5,587 713.5,585 714.5,587 716.5,589 717.5,586 720.5,595 722.5,588 724.5,596 725.5,597 727.5,595 730.5,596 732.5,600 733.5,597 735.5,604 737.5,600 739.5,602 740.5,601 742.5,607 743.5,604 744.5,608 745.5,602 747.5,609 749.5,605 751.5,608 752.5,608 754.5,609 755.5,603 758.5,605 760.5,608 762.5,613 763.5,608 768.5,612 769.5,613 771.5,613 773.5,614 775.5,611 778.5,625 779.5,595 780.5,588 780.5,587 780.5,588 781.5,595 782.5,628 785.5,620 787.5,617 790.5,621 792.5,616 794.5,619 796.5,613 797.5,621 799.5,614 800.5,612 801.5,625 803.5,620 805.5,616 806.5,622 807.5,616 808.5,619 810.5,614 811.5,616 813.5,614 815.5,625 817.5,619 819.5,620 820.5,614 821.5,623 823.5,618 826.5,621 831.5,626 832.5,621 834.5,624 836.5,625 839.5,613 842.5,619 843.5,627 844.5,620 846.5,628 848.5,625 850.5,623 851.5,625 852.5,627 855.5,623 856.5,631 858.5,624 860.5,620 862.5,633 864.5,625 866.5,629 867.5,622 869.5,628 871.5,625 872.5,628 874.5,618 875.5,629 876.5,622 878.5,622 880.5,628 881.5,628 883.5,625 885.5,620 886.5,632 887.5,625 892.5,622 898.5,630 901.5,627 902.5,626 904.5,631 906.5,621 908.5,630 910.5,627 913.5,629 914.5,625 915.5,627 916.5,627 919.5,628 920.5,607 921.5,600 921.5,599 921.5,600 922.5,607 923.5,628 926.5,630 928.5,629 931.5,627 933.5,627 935.5,629 938.5,629 939.5,623 940.5,618 941.5,621 943.5,632 946.5,622 947.5,632 950.5,625 952.5,621 954.5,628 955.5,628 957.5,619 962.5,632 964.5,626 967.5,626 969.5,627 970.5,629 971.5,624 973.5,629 974.5,632 976.5,622 978.5,630 981.5,631 983.5,622 985.5,628 988.5,623 989.5,630 990.5,619 992.5,629 994.5,628 997.5,628 999.5,627 1002.5,633 1003.5,621 1005.5,630 1006.5,628 1007.5,626 1009.5,629 1011.5,626 1013.5,630 1015.5,627 1018.5,632 1020.5,625 1021.5,621 1026.5,618 1028.5,633 1029.5,621 1032.5,629 1034.5,618 1036.5,634 1037.5,626 1039.5,630 1041.5,623 1042.5,618 1043.5,622 1044.5,631 1047.5,622 1048.5,627 1050.5,630 1052.5,618 1055.5,621 1057.5,632 1061.5,628 1062.5,568 1063.5,561 1064.5,560 1066.5,561 1067.5,568 1068.5,628 1069.5,633 1071.5,623 1072.5,631 1073.5,626 1075.5,628 1078.5,624 1079.5,630 1080.5,624 1081.5,627 1084.5,627 1085.5,626 1086.5,625 1088.5,626 1089.5,614 1090.5,626 1091.5,617 1094.5,634 1096.5,628 1097.5,625 1099.5,630 1101.5,623 1103.5,628 1105.5,626 1107.5,625 1108.5,629 1109.5,621 1110.5,622 1111.5,626 1113.5,618 1114.5,634 1115.5,632 1116.5,626 1117.5,622 1118.5,623 1120.5,629 1122.5,624 1123.5,630 1124.5,624 1125.5,629 1127.5,628 1128.5,621 1130.5,621 1132.5,630 1135.5,626 1137.5,630 1139.5,621 1141.5,627 1142.5,632 1148.5,620 1149.5,632 1150.5,630 1151.5,624 1153.5,629 1155.5,627 1156.5,633 1157.5,624 1159.5,627 1161.5,626 1162.5,622 1163.5,630 1165.5,628 1168.5,620 1170.5,633 1171.5,626 1172.5,626 1174.5,617 1175.5,632 1177.5,626 1179.5,629 1180.5,625 1183.5,631 1184.5,617 1186.5,630 1187.5,627 1188.5,621 1190.5,630 1193.5,623 1194.5,630 1196.5,629 1197.5,629 1198.5,621 1199.5,630 1200.5,627 1201.5,626 1203.5,630 1204.5,623 1207.5,628 1211.5,624 1213.5,629 1215.5,629 1217.5,628 1218.5,619 1220.5,630 1223.5,624 1225.5,632 1226.5,621 1229.5,627 1231.5,620 1232.5,630 1233.5,630 1235.5,626 1237.5,625 1238.5,627 1240.5,632 1243.5,622 1245.5,620 1247.5,633 1249.5,625 1251.5,626 1253.5,626 1255.5,626 1257.5,628 1258.5,625 1259.5,632 1261.5,622 1263.5,628 1264.5,623 1267.5,626 1269.5,626 1270.5,627 1271.5,629 1272.5,619 1272.5,627" stroke="#000" stroke-width="1" fill="none" stroke-linejoin="bevel"/>
<rect x="635" y="161" width="1" height="235" fill="#000"/><rect x="636" y="161" width="1" height="235" fill="#10107a"/><rect x="634" y="395" width="4" height="85" fill="#10107a"/><rect x="635" y="400" width="2" height="80" fill="#1a22b0"/>
<rect x="64" y="604" width="2" height="46" fill="#142196"/><rect x="64" y="592" width="1" height="14" fill="#000"/><rect x="127" y="597" width="1" height="68" fill="#000"/><rect x="248" y="581" width="2" height="59" fill="#142196"/><rect x="248" y="569" width="1" height="14" fill="#000"/><rect x="313" y="560" width="2" height="88" fill="#142196"/><rect x="313" y="548" width="1" height="14" fill="#000"/><rect x="377" y="542" width="2" height="105" fill="#142196"/><rect x="377" y="530" width="1" height="14" fill="#000"/><rect x="382" y="540" width="2" height="110" fill="#142196"/><rect x="382" y="528" width="1" height="14" fill="#000"/><rect x="442" y="532" width="2" height="118" fill="#142196"/><rect x="442" y="520" width="1" height="14" fill="#000"/><rect x="507" y="512" width="2" height="126" fill="#142196"/><rect x="507" y="500" width="1" height="14" fill="#000"/><rect x="571" y="484" width="2" height="138" fill="#142196"/><rect x="571" y="472" width="1" height="14" fill="#000"/><rect x="700" y="482" width="2" height="110" fill="#142196"/><rect x="700" y="470" width="1" height="14" fill="#000"/><rect x="765" y="496" width="2" height="136" fill="#142196"/><rect x="765" y="484" width="1" height="14" fill="#000"/><rect x="829" y="522" width="2" height="128" fill="#142196"/><rect x="829" y="510" width="1" height="14" fill="#000"/><rect x="889" y="514" width="2" height="127" fill="#142196"/><rect x="889" y="502" width="1" height="14" fill="#000"/><rect x="895" y="536" width="2" height="114" fill="#142196"/><rect x="895" y="524" width="1" height="14" fill="#000"/><rect x="959" y="559" width="2" height="91" fill="#142196"/><rect x="959" y="547" width="1" height="14" fill="#000"/><rect x="1024" y="580" width="2" height="70" fill="#142196"/><rect x="1024" y="568" width="1" height="14" fill="#000"/><rect x="1145" y="605" width="2" height="45" fill="#142196"/><rect x="1145" y="593" width="1" height="14" fill="#000"/><rect x="1209" y="604" width="2" height="44" fill="#142196"/><rect x="1209" y="592" width="1" height="14" fill="#000"/>
</svg>
<!-- y labels -->
<div class="t" style="left:0px;top:156.71px;font-size:15.7px;line-height:15.7px;font-weight:400;color:#111;background:#fff;padding-right:1px;padding-left:5px;">40 dBm</div>
<div class="abs" style="left:0;top:163px;width:5px;height:1px;background:#e4b4b4"></div><div class="t" style="left:0px;top:206.71px;font-size:15.7px;line-height:15.7px;font-weight:400;color:#111;background:#fff;padding-right:1px;padding-left:5px;">30 dBm</div>
<div class="t" style="left:0px;top:256.71px;font-size:15.7px;line-height:15.7px;font-weight:400;color:#111;background:#fff;padding-right:1px;padding-left:5px;">20 dBm</div>
<div class="t" style="left:0px;top:305.71px;font-size:15.7px;line-height:15.7px;font-weight:400;color:#111;background:#fff;padding-right:1px;padding-left:5px;">10 dBm</div>
<div class="t" style="left:0px;top:355.71px;font-size:15.7px;line-height:15.7px;font-weight:400;color:#111;background:#fff;padding-right:1px;padding-left:5px;">0 dBm</div>
<div class="t" style="left:0px;top:405.71px;font-size:15.7px;line-height:15.7px;font-weight:400;color:#111;background:#fff;padding-right:1px;padding-left:5px;">-10 dBm</div>
<div class="t" style="left:0px;top:454.71px;font-size:15.7px;line-height:15.7px;font-weight:400;color:#111;background:#fff;padding-right:1px;padding-left:5px;">-20 dBm</div>
<div class="t" style="left:0px;top:504.71px;font-size:15.7px;line-height:15.7px;font-weight:400;color:#111;background:#fff;padding-right:1px;padding-left:5px;">-30 dBm</div>
<div class="t" style="left:0px;top:554.71px;font-size:15.7px;line-height:15.7px;font-weight:400;color:#111;background:#fff;padding-right:1px;padding-left:5px;">-40 dBm</div>
<div class="t" style="left:0px;top:604.71px;font-size:15.7px;line-height:15.7px;font-weight:400;color:#111;background:linear-gradient(to right,#fff 62px,transparent 62px);padding-right:1px;padding-left:5px;">-50 dBm</div>
<div class="t" style="left:5px;top:653.71px;font-size:15.7px;line-height:15.7px;font-weight:400;color:#111;text-shadow:0 0 3px #fff,0 0 3px #fff,0 0 2px #fff;">-60 dBm</div>
<div class="t" style="left:5px;top:703.71px;font-size:15.7px;line-height:15.7px;font-weight:400;color:#111;text-shadow:0 0 3px #fff,0 0 3px #fff,0 0 2px #fff;">-70 dBm</div>
<div class="t" style="right:1025px;top:156.54px;font-size:15.9px;line-height:15.9px;font-weight:400;color:#e02020;background:rgba(255,255,255,.8);padding-left:3px;padding-right:2px;">40.000 dBm</div>
<div class="t" style="left:628.5px;top:134.42px;font-size:12.5px;line-height:12.5px;font-weight:400;color:#1a8fd0;transform:scaleX(0.88);transform-origin:0 0;">M1</div>
<svg class="abs" style="left:631px;top:152px" width="10" height="9"><path d="M0.5 0.5H9.5L5 8.5Z" fill="#1a8fd0"/></svg>
<div class="t" style="left:693.5px;top:443.42px;font-size:12.5px;line-height:12.5px;font-weight:400;color:#1a8fd0;transform:scaleX(0.83);transform-origin:0 0;">D2</div>
<svg class="abs" style="left:696px;top:462px" width="10" height="8"><path d="M0.5 7.5H9.5L5 0.5Z" fill="#1a8fd0"/></svg>
<div class="t" style="left:1119px;top:126.06px;font-size:14.1px;line-height:14.1px;font-weight:700;color:#1a8fd0;background:rgba(255,255,255,.8);padding-bottom:4px;">D2[1]</div>
<div class="t" style="right:6px;top:126.06px;font-size:14.1px;line-height:14.1px;font-weight:700;color:#1a8fd0;background:rgba(255,255,255,.8);padding-bottom:4px;">-60.49 dB</div>
<div class="t" style="right:6px;top:150.06px;font-size:14.1px;line-height:14.1px;font-weight:700;color:#1a8fd0;background:rgba(255,255,255,.8);padding-bottom:4px;">509.00 kHz</div>
<div class="t" style="left:1119px;top:174.06px;font-size:14.1px;line-height:14.1px;font-weight:700;color:#1a8fd0;background:rgba(255,255,255,.8);padding-bottom:4px;">M1[2]</div>
<div class="t" style="right:6px;top:174.06px;font-size:14.1px;line-height:14.1px;font-weight:700;color:#1a8fd0;background:rgba(255,255,255,.8);padding-bottom:4px;">40.40 dBm</div>
<div class="t" style="right:6px;top:198.06px;font-size:14.1px;line-height:14.1px;font-weight:700;color:#1a8fd0;background:rgba(255,255,255,.8);padding-bottom:4px;">2.40000000 GHz</div>
<div class="t" style="left:2px;top:747.93px;font-size:16.5px;line-height:16.5px;font-weight:700;color:#000;transform:scaleX(0.873);transform-origin:0 0;">CF 2.4 GHz</div>
<div class="t" style="left:445px;top:747.93px;font-size:16.5px;line-height:16.5px;font-weight:700;color:#000;transform:scaleX(0.932);transform-origin:0 0;">1001 pts</div>
<div class="t" style="left:758.2px;top:747.93px;font-size:16.5px;line-height:16.5px;font-weight:700;color:#000;transform:scaleX(0.985);transform-origin:0 0;">1.0 MHz/</div>
<div class="t" style="right:8.599999999999909px;top:747.93px;font-size:16.5px;line-height:16.5px;font-weight:700;color:#000;transform:scaleX(0.952);transform-origin:100% 0;">Span 10.0 MHz</div>
</body></html>
